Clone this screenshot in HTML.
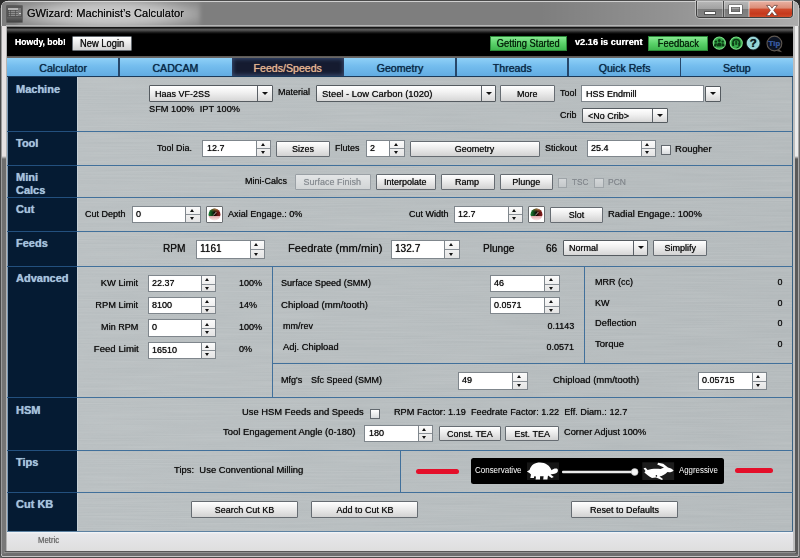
<!DOCTYPE html>
<html>
<head>
<meta charset="utf-8">
<title>GWizard: Machinist's Calculator</title>
<style>
html,body{margin:0;padding:0;}
body{width:800px;height:558px;overflow:hidden;position:relative;background:#8a8a8a;font-family:"Liberation Sans",Arial,sans-serif;font-size:9.8px;color:#141414;text-shadow:0 0 .7px;}
.a{position:absolute;white-space:nowrap;}
#frame{left:0;top:0;width:800px;height:558px;background:linear-gradient(180deg,#858585 0px,#7e7e7e 4px,#7e7e7e 26px,#8a8a8a 27px,#9a9a9a 60px,#a0a0a0 300px,#8e8e8e 550px,#6e6e6e 553px,#6e6e6e 558px);}
#title{left:27px;top:7.3px;font-size:10.4px;color:#111;line-height:14px;text-shadow:0 0 .5px #222;}
#blackbar{left:7px;top:26.6px;width:786px;height:32px;background:linear-gradient(180deg,#141414 0,#141414 1.3px,#606060 1.8px,#4c4c4c 3.4px,#1c1c1c 5.4px,#000 7px,#000 28.6px,#686562 29.6px,#6c6966 32px);}
.tab{top:58.4px;height:17.6px;overflow:hidden;line-height:20.8px;text-align:center;font-size:10.6px;color:#0b2a48;background:linear-gradient(180deg,#8fd0f7 0,#74bdee 45%,#62ace2 100%);}
.tab.sel{background:#151b30;color:#e2b38f;box-shadow:inset 0 0 4px 1px #3a4f74;}
.tsep{top:58.4px;width:1.6px;height:18px;background:#26476a;}
#tabline{left:7px;top:76px;width:786px;height:1.2px;background:#1b3a5a;}
#side{left:7px;top:77px;width:69.5px;height:455px;background:#051b33;border-left:.7px solid #7d9ab5;box-sizing:border-box;}
#content{left:76.5px;top:77px;width:716.5px;height:455px;background:linear-gradient(90deg,#b8bec0,#b3b9bb);border-right:1px solid #3b6282;border-left:1px solid #c6d0d6;box-sizing:border-box;}
#status{left:7px;top:532.4px;width:786px;height:18.2px;background:linear-gradient(180deg,#f3f6fb 0,#e7e7ea 2px,#dedede 100%);}
.sl{left:16px;font-weight:bold;font-size:11px;line-height:13px;color:#a4c2dc;}
.hl{left:7px;width:786px;height:1.2px;background:#41709b;}
.vl{width:1.3px;background:#41709b;}
.t{line-height:11px;}
.ns{box-sizing:border-box;border:1px solid #7f868c;background:#fff;}
.ns .tx{position:absolute;left:3.4px;top:0;bottom:2px;display:flex;align-items:center;transform:scaleX(.918);transform-origin:0 50%;}
.ns .spb{position:absolute;right:0;top:0;bottom:0;width:13.5px;background:linear-gradient(180deg,#fbfbfb,#e4e4e4);border-left:1px solid #7f868c;}
.ns .spb i{position:absolute;left:0;right:0;top:50%;height:1px;background:#8a9096;}
.ns .spb b{position:absolute;left:3.6px;width:0;height:0;border-left:2.8px solid transparent;border-right:2.8px solid transparent;}
.ns .spb b.u{top:2.3px;border-bottom:3px solid #111;}
.ns .spb b.d{bottom:1.8px;border-top:3px solid #111;}
.btn{box-sizing:border-box;border:1px solid #666c72;background:linear-gradient(180deg,#ffffff 0,#ececec 45%,#d2d2d2 100%);text-align:center;display:flex;align-items:center;justify-content:center;border-radius:1px;}
.btn.dis{color:#8a8f94;border-color:#9aa0a5;background:linear-gradient(180deg,#e4e6e7 0,#d2d5d6 100%);}
.cmb{box-sizing:border-box;border:1px solid #555b60;background:linear-gradient(180deg,#ffffff 0,#f2f2f2 40%,#d6d6d6 100%);border-radius:1px;}
.cmb .tx{position:absolute;left:5px;top:0;bottom:0;display:flex;align-items:center;transform:scaleX(.918);transform-origin:0 50%;}
.s{display:inline-block;transform:scaleX(.918);}
.cmb .dv{position:absolute;right:13.5px;top:0;bottom:0;width:1px;background:#5a6066;}
.cmb .ar{position:absolute;right:3.5px;top:50%;margin-top:-1.5px;width:0;height:0;border-left:3px solid transparent;border-right:3px solid transparent;border-top:3.5px solid #111;}
.cb{box-sizing:border-box;border:1px solid #62686e;background:linear-gradient(180deg,#ffffff,#d9dcde);}
.cb.dis{border-color:#9ea4a8;background:linear-gradient(180deg,#d4d7d9,#c4c8ca);}
.gbtn{box-sizing:border-box;border:1px solid #6a6e72;background:#fff;border-radius:1px;}
.grn{box-sizing:border-box;background:linear-gradient(180deg,#86e890 0,#5bd26a 50%,#3fb84f 100%);border:1px solid #2c8a3a;color:#06250b;display:flex;align-items:center;justify-content:center;font-size:10.2px;}
.wt{color:#fff;font-weight:bold;}
</style>
</head>
<body>
<div id="frame" class="a"></div>
<div class="a" style="left:18px;top:-1px;width:182px;height:30px;background:radial-gradient(ellipse at 50% 50%,rgba(255,255,255,.62) 0,rgba(255,255,255,.5) 45%,rgba(255,255,255,.18) 75%,rgba(255,255,255,0) 100%);filter:blur(2px);"></div>
<div class="a" style="left:540px;top:1.5px;width:258px;height:24px;background:linear-gradient(90deg,rgba(255,255,255,0) 0,rgba(255,255,255,.16) 50%,rgba(255,255,255,.36) 100%);"></div>
<div class="a" style="left:0;top:0;width:800px;height:558px;box-sizing:border-box;border:1px solid #4a4a4a;border-radius:6px 6px 3px 3px;box-shadow:inset 0 0 0 .9px rgba(228,228,228,.8);"></div>
<div class="a" style="left:0;top:0;width:8px;height:8px;background:radial-gradient(circle at 8px 8px,transparent 7px,#2a2a2a 7.6px);"></div>
<div class="a" style="left:792px;top:0;width:8px;height:8px;background:radial-gradient(circle at 0 8px,transparent 7px,#2a2a2a 7.6px);"></div>
<div class="a" style="left:0.8px;top:26px;width:1.2px;height:528px;background:#9c9c9c;"></div>
<div class="a" style="left:2px;top:26px;width:3.6px;height:528px;background:linear-gradient(180deg,#e6e2e2 0,#e6e2e2 130px,#6e6e6e 133px,#787878 100%);"></div>
<div class="a" style="left:5.6px;top:26px;width:1.4px;height:526px;background:#b4b4b4;"></div>
<div class="a" style="left:793.2px;top:26px;width:1.8px;height:527px;background:#bebebe;"></div>
<div class="a" style="left:795px;top:26px;width:2.5px;height:528px;background:linear-gradient(180deg,#ececec 0,#ececec 130px,#5a5a5a 133px,#5a5a5a 100%);"></div>
<div class="a" style="left:797.5px;top:26px;width:1.5px;height:530px;background:#a8a8a8;"></div>
<div class="a" style="left:799px;top:8px;width:1px;height:548px;background:#6a6a6a;"></div>
<div class="a" style="left:5px;top:550.6px;width:790px;height:1.4px;background:#565656;"></div>
<div class="a" style="left:4px;top:552px;width:792px;height:1px;background:#909090;"></div>
<div class="a" style="left:2px;top:556.4px;width:796px;height:1px;background:#c6c6c6;"></div>
<div class="a" style="left:5.5px;top:25.2px;width:789px;height:1.3px;background:#b6b6b6;"></div>
<div class="a" style="left:7px;top:6.4px;width:15.4px;height:15.4px;background:linear-gradient(180deg,#585858 0,#505050 100%);box-shadow:0 0 0 .6px #474747;">
<div class="a" style="left:1px;top:1.6px;width:9.6px;height:1.7px;background:#b4b4b4;"></div>
<div class="a" style="left:1px;top:3.9px;width:9.6px;height:6.2px;background:#8e8e8e;"></div>
<div class="a" style="left:1px;top:3.9px;width:9.6px;height:6.2px;background:repeating-linear-gradient(90deg,rgba(70,70,70,.6) 0,rgba(70,70,70,.6) .6px,transparent .6px,transparent 2.4px),repeating-linear-gradient(180deg,rgba(70,70,70,.6) 0,rgba(70,70,70,.6) .6px,transparent .6px,transparent 2.05px);"></div>
<div class="a" style="left:11.2px;top:1.6px;width:3.2px;height:8.5px;background:#787878;"></div>
<div class="a" style="left:12.3px;top:6.6px;width:1.5px;height:1.5px;background:#cfcfcf;"></div>
<div class="a" style="left:0;top:10.6px;width:15.4px;height:4.8px;background:linear-gradient(180deg,#646464,#444);"></div>
</div>
<div class="a" style="left:695.7px;top:0.7px;width:97.5px;height:17.5px;box-sizing:border-box;border:1px solid #3f3f3f;border-top:none;border-radius:0 0 4px 4px;overflow:hidden;box-shadow:0 0 0 1px rgba(220,220,220,.55);">
  <div class="a" style="left:0;top:0;width:26.5px;height:17px;background:linear-gradient(180deg,#b9b9b9 0,#a2a2a2 45%,#7b7b7b 50%,#858585 100%);border-right:1px solid #4a4a4a;box-shadow:inset 0 0 0 1px rgba(255,255,255,.3);"></div>
  <div class="a" style="left:27.3px;top:0;width:24.7px;height:17px;background:linear-gradient(180deg,#b9b9b9 0,#a2a2a2 45%,#7b7b7b 50%,#858585 100%);border-right:1px solid #4a4a4a;box-shadow:inset 0 0 0 1px rgba(255,255,255,.3);"></div>
  <div class="a" style="left:52.8px;top:0;width:44px;height:17px;background:linear-gradient(180deg,#e9b3a4 0,#dc8d78 40%,#cf4a2c 50%,#c5381c 75%,#d4532f 100%);box-shadow:inset 0 0 0 1px rgba(255,255,255,.3);"></div>
  <div class="a" style="left:7.4px;top:10.8px;width:12.4px;height:3.3px;box-sizing:border-box;background:#fff;border:0.6px solid #555;border-radius:.5px;"></div>
  <div class="a" style="left:32.2px;top:4.6px;width:13.2px;height:9.2px;box-sizing:border-box;border:2px solid #fff;border-top-width:2.6px;box-shadow:0 0 0 .6px #555, inset 0 0 0 .6px #555;border-radius:.5px;"></div>
  <svg class="a" style="left:68px;top:3.2px;" width="14" height="13" viewBox="0 0 14 13"><path d="M1.6 1.4 L4.9 1.4 L7 4.2 L9.1 1.4 L12.4 1.4 L8.7 6.3 L12.6 11.6 L9.3 11.6 L7 8.5 L4.7 11.6 L1.4 11.6 L5.3 6.3 Z" fill="#fff" stroke="#5a3a34" stroke-width=".7" stroke-linejoin="round"/></svg>
</div>
<div id="title" class="a" style="transform-origin:0 50%;transform:scaleX(1.0667);">GWizard: Machinist’s Calculator</div>
<div id="blackbar" class="a"></div>
<div class="a wt" style="left:15px;transform-origin:0 50%;top:36.20px;font-size:9.8px;line-height:12px;transform:scaleX(0.8783);">Howdy, bob!</div>
<div class="a btn " style="left:72px;top:36px;width:60px;height:14.5px;font-size:10.2px;"><span class="s">New Login</span></div>
<div class="a grn" style="left:489.5px;top:36px;width:77.5px;height:14.5px;"><span class="s">Getting Started</span></div>
<div class="a wt" style="left:574.5px;transform-origin:0 50%;top:35.80px;font-size:9.8px;line-height:12px;transform:scaleX(0.9387);">v2.16 is current</div>
<div class="a grn" style="left:648px;top:36px;width:60px;height:14.5px;"><span class="s">Feedback</span></div>
<svg class="a" style="left:710px;top:33px;" width="82" height="22" viewBox="710 33 82 22">
<defs>
<radialGradient id="gg" cx="50%" cy="40%" r="60%"><stop offset="0" stop-color="#3fb552"/><stop offset=".7" stop-color="#2f9e42"/><stop offset="1" stop-color="#7be08a"/></radialGradient>
</defs>
<circle cx="719.3" cy="43.1" r="6.1" fill="#35a648" stroke="#79df86" stroke-width="1.1"/>
<g fill="#0b3a14">
<circle cx="719.3" cy="40.4" r="1.5"/><path d="M716.9 46.6 q0 -4 2.4 -4 q2.4 0 2.4 4 z"/>
<circle cx="715.9" cy="41.6" r="1.2"/><path d="M714 46.4 q0 -3.2 1.9 -3.2 q1 0 1.4 .8 q-.9 1 -.9 2.4 z"/>
<circle cx="722.7" cy="41.6" r="1.2"/><path d="M724.6 46.4 q0 -3.2 -1.9 -3.2 q-1 0 -1.4 .8 q.9 1 .9 2.4 z"/>
</g>
<circle cx="736.2" cy="43.1" r="6.1" fill="#35a648" stroke="#79df86" stroke-width="1.1"/>
<path d="M732.9 44.6 v-1.8 a3.3 3.3 0 0 1 6.6 0 v1.8" fill="none" stroke="#0b3a14" stroke-width="1.5"/>
<rect x="732.2" y="42.8" width="1.9" height="3.3" rx=".6" fill="#0b3a14"/><rect x="738.3" y="42.8" width="1.9" height="3.3" rx=".6" fill="#0b3a14"/>
<path d="M739.2 46 q0 1.6 -2.6 1.7" fill="none" stroke="#0b3a14" stroke-width=".9"/>
<rect x="735.2" y="40.6" width="2" height="4.4" rx=".8" fill="#0b3a14" opacity=".85"/>
<circle cx="753.2" cy="43.1" r="6.1" fill="#93d6d8" stroke="#b9ecec" stroke-width="1"/>
<circle cx="753.2" cy="43.1" r="6.8" fill="none" stroke="#1d3c40" stroke-width=".6"/>
<text x="753.2" y="47.2" text-anchor="middle" font-family="Liberation Sans,Arial,sans-serif" font-weight="bold" font-size="11.5" fill="#0a1c22">?</text>
<circle cx="774.4" cy="43.5" r="7.4" fill="#0c1424" stroke="#5e5750" stroke-width="1.1"/>
<path d="M779 49.2 l3.2 3 l-5.6 -1.2 z" fill="#5c5650"/>
<text x="774.4" y="46.3" text-anchor="middle" font-family="Liberation Sans,Arial,sans-serif" font-weight="bold" font-size="7.8" fill="#2a58b8" stroke="#6f97dc" stroke-width=".2">Tip</text>
</svg>
<div class="a tab" style="left:7.00px;width:112.29px;">Calculator</div>
<div class="a tab" style="left:119.29px;width:112.29px;">CADCAM</div>
<div class="a tab sel" style="left:231.57px;width:112.29px;">Feeds/Speeds</div>
<div class="a tab" style="left:343.86px;width:112.29px;">Geometry</div>
<div class="a tab" style="left:456.14px;width:112.29px;">Threads</div>
<div class="a tab" style="left:568.43px;width:112.29px;">Quick Refs</div>
<div class="a tab" style="left:680.71px;width:112.29px;">Setup</div>
<div class="a tsep" style="left:118.09px;"></div>
<div class="a tsep" style="left:454.94px;"></div>
<div class="a tsep" style="left:567.23px;"></div>
<div class="a tsep" style="left:679.51px;"></div>
<div id="tabline" class="a"></div>
<div id="side" class="a"></div>
<div id="content" class="a"></div>
<div id="status" class="a"></div>
<svg class="a" style="left:77.5px;top:78px;opacity:.5;" width="714" height="453"><filter id="bm" x="0" y="0" width="100%" height="100%"><feTurbulence type="fractalNoise" baseFrequency="0.012 0.75" numOctaves="2" seed="3"/><feColorMatrix type="matrix" values="0 0 0 0 1  0 0 0 0 1  0 0 0 0 1  .22 .22 0 0 -.13"/></filter><rect width="714" height="453" filter="url(#bm)"/></svg>
<div class="a hl" style="top:130.5px;left:7px;width:786px;"></div>
<div class="a" style="left:7px;top:130.5px;width:69.5px;height:1.2px;background:#23507e;"></div>
<div class="a hl" style="top:164.5px;left:7px;width:786px;"></div>
<div class="a" style="left:7px;top:164.5px;width:69.5px;height:1.2px;background:#23507e;"></div>
<div class="a hl" style="top:197px;left:7px;width:786px;"></div>
<div class="a" style="left:7px;top:197px;width:69.5px;height:1.2px;background:#23507e;"></div>
<div class="a hl" style="top:231px;left:7px;width:786px;"></div>
<div class="a" style="left:7px;top:231px;width:69.5px;height:1.2px;background:#23507e;"></div>
<div class="a hl" style="top:265.5px;left:7px;width:786px;"></div>
<div class="a" style="left:7px;top:265.5px;width:69.5px;height:1.2px;background:#23507e;"></div>
<div class="a hl" style="top:397px;left:7px;width:786px;"></div>
<div class="a" style="left:7px;top:397px;width:69.5px;height:1.2px;background:#23507e;"></div>
<div class="a hl" style="top:449.5px;left:7px;width:786px;"></div>
<div class="a" style="left:7px;top:449.5px;width:69.5px;height:1.2px;background:#23507e;"></div>
<div class="a hl" style="top:491.5px;left:7px;width:786px;"></div>
<div class="a" style="left:7px;top:491.5px;width:69.5px;height:1.2px;background:#23507e;"></div>
<div class="a" style="left:7px;top:531.3px;width:786px;height:1px;background:#5d82a2;"></div>
<div class="a sl" style="left:16px;transform-origin:0 50%;top:82.69px;font-size:11px;line-height:13px;">Machine</div>
<div class="a sl" style="left:16px;transform-origin:0 50%;top:136.69px;font-size:11px;line-height:13px;">Tool</div>
<div class="a sl" style="left:16px;transform-origin:0 50%;top:170.69px;font-size:11px;line-height:13px;">Mini</div>
<div class="a sl" style="left:16px;transform-origin:0 50%;top:183.69px;font-size:11px;line-height:13px;">Calcs</div>
<div class="a sl" style="left:16px;transform-origin:0 50%;top:202.69px;font-size:11px;line-height:13px;">Cut</div>
<div class="a sl" style="left:16px;transform-origin:0 50%;top:236.69px;font-size:11px;line-height:13px;">Feeds</div>
<div class="a sl" style="left:16px;transform-origin:0 50%;top:272.19px;font-size:11px;line-height:13px;">Advanced</div>
<div class="a sl" style="left:16px;transform-origin:0 50%;top:497.69px;font-size:11px;line-height:13px;">Cut KB</div>
<div class="a sl" style="left:16px;transform-origin:0 50%;top:404.19px;font-size:11px;line-height:13px;">HSM</div>
<div class="a sl" style="left:16px;transform-origin:0 50%;top:455.99px;font-size:11px;line-height:13px;">Tips</div>
<div class="a cmb" style="left:149px;top:85px;width:123.5px;height:16.5px;font-size:9.8px;"><span class="tx">Haas VF-2SS</span><span class="dv"></span><span class="ar"></span></div>
<div class="a " style="left:277.5px;transform-origin:0 50%;top:86.30px;font-size:9.8px;line-height:12px;transform:scaleX(0.918);">Material</div>
<div class="a cmb" style="left:315.5px;top:85px;width:180.5px;height:16.5px;font-size:9.8px;"><span class="tx" style="transform:scaleX(0.9613)">Steel - Low Carbon (1020)</span><span class="dv"></span><span class="ar"></span></div>
<div class="a btn " style="left:500px;top:85px;width:54.5px;height:16.5px;font-size:9.8px;"><span class="s">More</span></div>
<div class="a " style="left:559.5px;transform-origin:0 50%;top:86.80px;font-size:9.8px;line-height:12px;transform:scaleX(0.918);">Tool</div>
<div class="a ns" style="left:581px;top:85.3px;width:123px;height:17.2px;"><span class="tx" style="bottom:0;left:4px;">HSS Endmill</span></div>
<div class="a cmb" style="left:704.5px;top:86px;width:16.5px;height:15.5px;"><span class="ar" style="right:4.5px"></span></div>
<div class="a " style="left:149px;transform-origin:0 50%;top:103.00px;font-size:9.8px;line-height:12px;transform:scaleX(0.9403);">SFM 100%&nbsp; IPT 100%</div>
<div class="a " style="left:559.5px;transform-origin:0 50%;top:108.80px;font-size:9.8px;line-height:12px;transform:scaleX(0.918);">Crib</div>
<div class="a cmb" style="left:582px;top:107.5px;width:85.5px;height:15.5px;font-size:9.8px;"><span class="tx">&lt;No Crib&gt;</span><span class="dv"></span><span class="ar"></span></div>
<div class="a " style="left:157px;transform-origin:0 50%;top:142.00px;font-size:9.8px;line-height:12px;transform:scaleX(0.918);">Tool Dia.</div>
<div class="a ns" style="left:202.3px;top:139.5px;width:69.2px;height:17.7px;font-size:9.8px;"><span class="tx">12.7</span><span class="spb"><i></i><b class="u"></b><b class="d"></b></span></div>
<div class="a btn " style="left:276px;top:140.5px;width:54.3px;height:16px;font-size:9.8px;"><span class="s">Sizes</span></div>
<div class="a " style="left:335px;transform-origin:0 50%;top:142.00px;font-size:9.8px;line-height:12px;transform:scaleX(0.918);">Flutes</div>
<div class="a ns" style="left:366px;top:139.5px;width:38.7px;height:17.7px;font-size:9.8px;"><span class="tx">2</span><span class="spb"><i></i><b class="u"></b><b class="d"></b></span></div>
<div class="a btn " style="left:409.5px;top:140.5px;width:130px;height:16px;font-size:9.8px;"><span class="s">Geometry</span></div>
<div class="a " style="left:544.5px;transform-origin:0 50%;top:142.00px;font-size:9.8px;line-height:12px;transform:scaleX(0.918);">Stickout</div>
<div class="a ns" style="left:587px;top:139.5px;width:69.2px;height:17.7px;font-size:9.8px;"><span class="tx">25.4</span><span class="spb"><i></i><b class="u"></b><b class="d"></b></span></div>
<div class="a cb " style="left:661px;top:144.5px;width:10px;height:10px;"></div>
<div class="a " style="left:675px;transform-origin:0 50%;top:142.50px;font-size:9.8px;line-height:12px;transform:scaleX(0.9736);">Rougher</div>
<div class="a " style="left:244.5px;transform-origin:0 50%;top:175.00px;font-size:9.8px;line-height:12px;transform:scaleX(0.918);">Mini-Calcs</div>
<div class="a btn dis" style="left:294.5px;top:174px;width:76.5px;height:15.7px;font-size:9.8px;"><span class="s">Surface Finish</span></div>
<div class="a btn " style="left:375.5px;top:174px;width:60px;height:15.7px;font-size:9.8px;"><span class="s">Interpolate</span></div>
<div class="a btn " style="left:440.5px;top:174px;width:54px;height:15.7px;font-size:9.8px;"><span class="s">Ramp</span></div>
<div class="a btn " style="left:499.5px;top:174px;width:53.5px;height:15.7px;font-size:9.8px;"><span class="s">Plunge</span></div>
<div class="a cb dis" style="left:557.5px;top:178px;width:9.5px;height:9.5px;"></div>
<div class="a " style="left:572px;transform-origin:0 50%;top:176.00px;font-size:9.8px;line-height:12px;transform:scaleX(0.8418);color:#868b90;">TSC</div>
<div class="a cb dis" style="left:594px;top:178px;width:9.5px;height:9.5px;"></div>
<div class="a " style="left:607.5px;transform-origin:0 50%;top:176.00px;font-size:9.8px;line-height:12px;transform:scaleX(0.8699);color:#868b90;">PCN</div>
<div class="a " style="left:85px;transform-origin:0 50%;top:207.50px;font-size:9.8px;line-height:12px;transform:scaleX(0.918);">Cut Depth</div>
<div class="a ns" style="left:132px;top:205.5px;width:68.7px;height:17.7px;font-size:9.8px;"><span class="tx">0</span><span class="spb"><i></i><b class="u"></b><b class="d"></b></span></div>
<div class="a gbtn" style="left:205.5px;top:206px;width:17.3px;height:17.2px;"><svg style="position:absolute;left:1.3px;top:1.2px;" width="13" height="13" viewBox="0 0 13 13"><defs><linearGradient id="gt" x1="0" y1="0" x2="1" y2="0"><stop offset="0" stop-color="#248a3c"/><stop offset=".28" stop-color="#0f4a1b"/><stop offset=".5" stop-color="#0d0806"/><stop offset=".74" stop-color="#641414"/><stop offset="1" stop-color="#8e2020"/></linearGradient><linearGradient id="gb" x1="0" y1="0" x2="0" y2="1"><stop offset="0" stop-color="#e2a6aa"/><stop offset=".5" stop-color="#f3d6d6"/><stop offset="1" stop-color="#fff"/></linearGradient><radialGradient id="gh" cx="58%" cy="0%" r="55%"><stop offset="0" stop-color="#f0cf7a" stop-opacity=".95"/><stop offset=".5" stop-color="#c88a40" stop-opacity=".45"/><stop offset="1" stop-color="#c88a40" stop-opacity="0"/></radialGradient><clipPath id="gc"><circle cx="6.5" cy="6.6" r="6"/></clipPath></defs><g clip-path="url(#gc)"><rect x="0" y="0" width="13" height="8" fill="url(#gt)"/><rect x="0" y="0" width="13" height="8" fill="url(#gh)"/><rect x="0" y="8" width="13" height="6" fill="url(#gb)"/><path d="M5.4 7.4 L8.4 4" stroke="#f4e8d8" stroke-width=".7"/></g></svg></div>
<div class="a " style="left:227.5px;transform-origin:0 50%;top:207.50px;font-size:9.8px;line-height:12px;transform:scaleX(0.9303);">Axial Engage.: 0%</div>
<div class="a " style="left:408.7px;transform-origin:0 50%;top:207.50px;font-size:9.8px;line-height:12px;transform:scaleX(0.918);">Cut Width</div>
<div class="a ns" style="left:454px;top:205.5px;width:69.2px;height:17.7px;font-size:9.8px;"><span class="tx">12.7</span><span class="spb"><i></i><b class="u"></b><b class="d"></b></span></div>
<div class="a gbtn" style="left:528px;top:206px;width:17.3px;height:17.2px;"><svg style="position:absolute;left:1.3px;top:1.2px;" width="13" height="13" viewBox="0 0 13 13"><defs><linearGradient id="gt" x1="0" y1="0" x2="1" y2="0"><stop offset="0" stop-color="#248a3c"/><stop offset=".28" stop-color="#0f4a1b"/><stop offset=".5" stop-color="#0d0806"/><stop offset=".74" stop-color="#641414"/><stop offset="1" stop-color="#8e2020"/></linearGradient><linearGradient id="gb" x1="0" y1="0" x2="0" y2="1"><stop offset="0" stop-color="#e2a6aa"/><stop offset=".5" stop-color="#f3d6d6"/><stop offset="1" stop-color="#fff"/></linearGradient><radialGradient id="gh" cx="58%" cy="0%" r="55%"><stop offset="0" stop-color="#f0cf7a" stop-opacity=".95"/><stop offset=".5" stop-color="#c88a40" stop-opacity=".45"/><stop offset="1" stop-color="#c88a40" stop-opacity="0"/></radialGradient><clipPath id="gc"><circle cx="6.5" cy="6.6" r="6"/></clipPath></defs><g clip-path="url(#gc)"><rect x="0" y="0" width="13" height="8" fill="url(#gt)"/><rect x="0" y="0" width="13" height="8" fill="url(#gh)"/><rect x="0" y="8" width="13" height="6" fill="url(#gb)"/><path d="M5.4 7.4 L8.4 4" stroke="#f4e8d8" stroke-width=".7"/></g></svg></div>
<div class="a btn " style="left:549.5px;top:206.7px;width:53.7px;height:16px;font-size:9.8px;"><span class="s">Slot</span></div>
<div class="a " style="left:608px;transform-origin:0 50%;top:207.50px;font-size:9.8px;line-height:12px;transform:scaleX(0.9638);">Radial Engage.: 100%</div>
<div class="a " style="left:163px;transform-origin:0 50%;top:241.99px;font-size:11px;line-height:13px;transform:scaleX(0.918);">RPM</div>
<div class="a ns" style="left:196px;top:239.5px;width:69.3px;height:19.3px;font-size:11px;"><span class="tx">1161</span><span class="spb"><i></i><b class="u"></b><b class="d"></b></span></div>
<div class="a " style="left:287.5px;transform-origin:0 50%;top:241.99px;font-size:11px;line-height:13px;transform:scaleX(1.0105);">Feedrate (mm/min)</div>
<div class="a ns" style="left:390.5px;top:239.5px;width:69.2px;height:19.3px;font-size:11px;"><span class="tx">132.7</span><span class="spb"><i></i><b class="u"></b><b class="d"></b></span></div>
<div class="a " style="left:483px;transform-origin:0 50%;top:241.99px;font-size:11px;line-height:13px;transform:scaleX(0.918);">Plunge</div>
<div class="a " style="left:546px;transform-origin:0 50%;top:241.99px;font-size:11px;line-height:13px;transform:scaleX(0.918);">66</div>
<div class="a cmb" style="left:562.5px;top:239.7px;width:85.7px;height:16px;font-size:9.8px;"><span class="tx">Normal</span><span class="dv"></span><span class="ar"></span></div>
<div class="a btn " style="left:653px;top:240px;width:54.2px;height:15.7px;font-size:9.8px;"><span class="s">Simplify</span></div>
<div class="a " style="right:661.5px;transform-origin:100% 50%;top:276.70px;font-size:9.8px;line-height:12px;transform:scaleX(0.9566);">KW Limit</div>
<div class="a ns" style="left:147.5px;top:275px;width:68.7px;height:17.3px;font-size:9.8px;"><span class="tx">22.37</span><span class="spb"><i></i><b class="u"></b><b class="d"></b></span></div>
<div class="a " style="left:238.7px;transform-origin:0 50%;top:276.70px;font-size:9.8px;line-height:12px;transform:scaleX(0.918);">100%</div>
<div class="a " style="right:661.5px;transform-origin:100% 50%;top:298.70px;font-size:9.8px;line-height:12px;transform:scaleX(0.9493);">RPM Limit</div>
<div class="a ns" style="left:147.5px;top:297px;width:68.7px;height:17.3px;font-size:9.8px;"><span class="tx">8100</span><span class="spb"><i></i><b class="u"></b><b class="d"></b></span></div>
<div class="a " style="left:238.7px;transform-origin:0 50%;top:298.70px;font-size:9.8px;line-height:12px;transform:scaleX(0.918);">14%</div>
<div class="a " style="right:661.5px;transform-origin:100% 50%;top:321.00px;font-size:9.8px;line-height:12px;transform:scaleX(0.9232);">Min RPM</div>
<div class="a ns" style="left:147.5px;top:319.3px;width:68.7px;height:17.3px;font-size:9.8px;"><span class="tx">0</span><span class="spb"><i></i><b class="u"></b><b class="d"></b></span></div>
<div class="a " style="left:238.7px;transform-origin:0 50%;top:321.00px;font-size:9.8px;line-height:12px;transform:scaleX(0.918);">100%</div>
<div class="a " style="right:661.5px;transform-origin:100% 50%;top:343.20px;font-size:9.8px;line-height:12px;transform:scaleX(0.9836);">Feed Limit</div>
<div class="a ns" style="left:147.5px;top:341.5px;width:68.7px;height:17.3px;font-size:9.8px;"><span class="tx">16510</span><span class="spb"><i></i><b class="u"></b><b class="d"></b></span></div>
<div class="a " style="left:238.7px;transform-origin:0 50%;top:343.20px;font-size:9.8px;line-height:12px;transform:scaleX(0.918);">0%</div>
<div class="a vl" style="left:272px;top:266px;height:131.5px;"></div>
<div class="a " style="left:281px;transform-origin:0 50%;top:276.50px;font-size:9.8px;line-height:12px;transform:scaleX(0.9283);">Surface Speed (SMM)</div>
<div class="a " style="left:281px;transform-origin:0 50%;top:298.70px;font-size:9.8px;line-height:12px;transform:scaleX(0.9799);">Chipload (mm/tooth)</div>
<div class="a " style="left:283px;transform-origin:0 50%;top:319.70px;font-size:9.8px;line-height:12px;transform:scaleX(0.918);">mm/rev</div>
<div class="a " style="left:283px;transform-origin:0 50%;top:340.80px;font-size:9.8px;line-height:12px;transform:scaleX(0.9555);">Adj. Chipload</div>
<div class="a ns" style="left:490px;top:275px;width:69.5px;height:17.3px;font-size:9.8px;"><span class="tx">46</span><span class="spb"><i></i><b class="u"></b><b class="d"></b></span></div>
<div class="a ns" style="left:490px;top:297px;width:69.5px;height:17.3px;font-size:9.8px;"><span class="tx">0.0571</span><span class="spb"><i></i><b class="u"></b><b class="d"></b></span></div>
<div class="a " style="right:226px;transform-origin:100% 50%;top:320.00px;font-size:9.8px;line-height:12px;transform:scaleX(0.918);">0.1143</div>
<div class="a " style="right:226px;transform-origin:100% 50%;top:341.00px;font-size:9.8px;line-height:12px;transform:scaleX(0.918);">0.0571</div>
<div class="a vl" style="left:584px;top:266px;height:98px;"></div>
<div class="a hl" style="top:363.3px;left:272px;width:521px;"></div>
<div class="a " style="left:594.5px;transform-origin:0 50%;top:275.70px;font-size:9.8px;line-height:12px;transform:scaleX(0.918);">MRR (cc)</div>
<div class="a " style="left:594.5px;transform-origin:0 50%;top:296.50px;font-size:9.8px;line-height:12px;transform:scaleX(0.918);">KW</div>
<div class="a " style="left:594.5px;transform-origin:0 50%;top:317.30px;font-size:9.8px;line-height:12px;transform:scaleX(0.9523);">Deflection</div>
<div class="a " style="left:594.5px;transform-origin:0 50%;top:337.70px;font-size:9.8px;line-height:12px;transform:scaleX(0.9711);">Torque</div>
<div class="a " style="right:17.299999999999955px;transform-origin:100% 50%;top:275.70px;font-size:9.8px;line-height:12px;transform:scaleX(0.918);">0</div>
<div class="a " style="right:17.299999999999955px;transform-origin:100% 50%;top:296.50px;font-size:9.8px;line-height:12px;transform:scaleX(0.918);">0</div>
<div class="a " style="right:17.299999999999955px;transform-origin:100% 50%;top:317.30px;font-size:9.8px;line-height:12px;transform:scaleX(0.918);">0</div>
<div class="a " style="right:17.299999999999955px;transform-origin:100% 50%;top:338.00px;font-size:9.8px;line-height:12px;transform:scaleX(0.918);">0</div>
<div class="a " style="left:281px;transform-origin:0 50%;top:374.00px;font-size:9.8px;line-height:12px;transform:scaleX(0.918);">Mfg's</div>
<div class="a " style="left:311px;transform-origin:0 50%;top:374.00px;font-size:9.8px;line-height:12px;transform:scaleX(0.918);">Sfc Speed (SMM)</div>
<div class="a ns" style="left:458px;top:372px;width:69.5px;height:17.5px;font-size:9.8px;"><span class="tx">49</span><span class="spb"><i></i><b class="u"></b><b class="d"></b></span></div>
<div class="a " style="left:552.5px;transform-origin:0 50%;top:374.00px;font-size:9.8px;line-height:12px;transform:scaleX(0.9709);">Chipload (mm/tooth)</div>
<div class="a ns" style="left:698px;top:372px;width:69.2px;height:17.5px;font-size:9.8px;"><span class="tx">0.05715</span><span class="spb"><i></i><b class="u"></b><b class="d"></b></span></div>
<div class="a " style="left:242px;transform-origin:0 50%;top:406.10px;font-size:9.8px;line-height:12px;transform:scaleX(0.9588);">Use HSM Feeds and Speeds</div>
<div class="a cb " style="left:370px;top:408.7px;width:10px;height:10px;"></div>
<div class="a " style="left:393.7px;transform-origin:0 50%;top:406.10px;font-size:9.8px;line-height:12px;transform:scaleX(0.9359);">RPM Factor: 1.19&nbsp; Feedrate Factor: 1.22&nbsp; Eff. Diam.: 12.7</div>
<div class="a " style="left:222.5px;transform-origin:0 50%;top:426.20px;font-size:9.8px;line-height:12px;transform:scaleX(0.9612);">Tool Engagement Angle (0-180)</div>
<div class="a ns" style="left:364.2px;top:424.5px;width:69px;height:17.5px;font-size:9.8px;"><span class="tx">180</span><span class="spb"><i></i><b class="u"></b><b class="d"></b></span></div>
<div class="a btn " style="left:438.7px;top:425.5px;width:62px;height:15.5px;font-size:9.8px;"><span class="s">Const. TEA</span></div>
<div class="a btn " style="left:505px;top:425.5px;width:54px;height:15.5px;font-size:9.8px;"><span class="s">Est. TEA</span></div>
<div class="a " style="left:564px;transform-origin:0 50%;top:426.20px;font-size:9.8px;line-height:12px;transform:scaleX(0.943);">Corner Adjust 100%</div>
<div class="a " style="left:173.7px;transform-origin:0 50%;top:463.70px;font-size:9.8px;line-height:12px;transform:scaleX(0.9637);">Tips:&nbsp; Use Conventional Milling</div>
<div class="a vl" style="left:399.7px;top:450px;height:42px;"></div>
<div class="a" style="left:416px;top:468.7px;width:43px;height:5.3px;border-radius:3px;background:#e40f2a;"></div>
<div class="a" style="left:734.7px;top:468px;width:38.5px;height:5.3px;border-radius:3px;background:#e40f2a;"></div>
<div class="a" style="left:470.7px;top:458px;width:253px;height:26px;border-radius:2.5px;background:#000;"></div>
<div class="a " style="left:475px;transform-origin:0 50%;top:465.09px;font-size:8.4px;line-height:10px;transform:scaleX(0.9526);color:#fff;text-shadow:none;">Conservative</div>
<div class="a " style="left:679px;transform-origin:0 50%;top:465.09px;font-size:8.4px;line-height:10px;transform:scaleX(0.9385);color:#fff;text-shadow:none;">Aggressive</div>
<svg class="a" style="left:470px;top:457px;" width="255" height="28" viewBox="470 457 255 28">
<rect x="527" y="462.4" width="32" height="17.6" fill="#151515"/>
<rect x="642.3" y="462.3" width="31.8" height="17.7" fill="#1d1d1d"/>
<path d="M526.9 471.4 L529.5 470 C531 465 535 462.6 540 462.6 C545.5 462.6 550 466 551.6 470.3 C553 468.9 555 468.2 556.6 468.6 C558.5 469.1 558.4 472.5 556 473.3 C554 474 552 474 550.5 474.6 L553.8 477 L551.6 478.1 L548 475.6 L547.4 479.4 L543.2 479.4 L543.6 476.2 L540.1 476.2 L540 479.4 L535.6 479.4 L536 476.6 L534.2 476.2 L533.9 477.9 L530.3 477.9 L531 474.6 L529.4 473 Z" fill="#fff"/>
<rect x="562" y="470.7" width="71" height="2.5" rx="1" fill="#e9e9e9"/>
<circle cx="634.7" cy="472" r="3.4" fill="#f4f4f4" stroke="#bdbdbd" stroke-width=".6"/>
<path d="M643.5 468.3 L645.6 467.7 L647.6 470 C651 468.8 656 468.5 660.5 469 L664 467.6 L657.2 464.6 L658.2 462.8 L663.2 463.8 L668 467.5 C670 468 672.5 469 673.6 470.4 C673 471.8 670 472.4 667.5 472.1 C665 474.5 662 476 659.5 476.6 L663 479 L662 479.9 L656 477.6 L652 477.9 C649 476.6 646 474.2 644.4 472.6 L645.5 471 Z" fill="#fff"/>
<circle cx="656.4" cy="475.9" r=".8" fill="#111"/>
</svg>
<div class="a btn " style="left:190.5px;top:500.7px;width:107px;height:17.5px;font-size:9.8px;"><span class="s">Search Cut KB</span></div>
<div class="a btn " style="left:311.2px;top:500.7px;width:107px;height:17.5px;font-size:9.8px;"><span class="s">Add to Cut KB</span></div>
<div class="a btn " style="left:571.2px;top:500.7px;width:107px;height:17.5px;font-size:9.8px;"><span class="s">Reset to Defaults</span></div>
<div class="a " style="left:38px;transform-origin:0 50%;top:535.15px;font-size:8.5px;line-height:10px;transform:scaleX(0.918);color:#6c6c6c;">Metric</div>
</body>
</html>
